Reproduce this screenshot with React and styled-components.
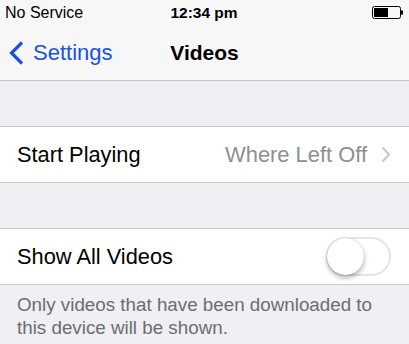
import React, { useState } from "react";
import styled, { createGlobalStyle } from "styled-components";

const GlobalStyle = createGlobalStyle`
  html, body {
    margin: 0;
    padding: 0;
    background: #efeff4;
    font-family: "Liberation Sans", Arial, sans-serif;
  }
`;

const Screen = styled.div`
  width: 409px;
  height: 344px;
  overflow: hidden;
  background: #efeff4;
`;

const Header = styled.header`
  background: #f7f7f8;
  border-bottom: 1px solid #c8c7cc;
`;

const StatusBar = styled.div`
  height: 25px;
  display: grid;
  grid-template-columns: 1fr auto 1fr;
  align-items: center;
  padding: 0 6px 0 5px;
  font-size: 16px;
  color: #000;
`;

const Carrier = styled.span``;

const Clock = styled.span`
  font-weight: bold;
  font-size: 15.5px;
`;

const Battery = styled.div`
  justify-self: end;
  display: flex;
  align-items: center;
`;

const NavBar = styled.div`
  height: 55px;
  display: grid;
  grid-template-columns: 1fr auto 1fr;
  align-items: center;
  padding: 0 8px;
`;

const BackButton = styled.div`
  display: flex;
  align-items: center;
  gap: 9px;
  color: #1a52de;
  font-size: 22px;
`;

const Title = styled.div`
  font-size: 21px;
  font-weight: bold;
  color: #000;
`;

const Spacer = styled.div`
  height: 45px;
`;

const Group = styled.div`
  background: #fff;
  border-top: 1px solid #c8c7cc;
  border-bottom: 1px solid #c8c7cc;
`;

const Row = styled.div`
  height: 55px;
  display: flex;
  align-items: center;
  justify-content: space-between;
  padding: 0 ${(p) => p.$right}px 0 17px;
`;

const Label = styled.span`
  font-size: 21.8px;
  color: #000;
`;

const Detail = styled.span`
  display: flex;
  align-items: center;
  gap: 14px;
  font-size: 21.9px;
  color: #8e8e93;
`;

const Switch = styled.button`
  position: relative;
  width: 65px;
  height: 39px;
  padding: 0;
  border-radius: 20px;
  border: 2px solid #e5e5e5;
  background: #fff;
  cursor: pointer;
`;

const Knob = styled.span`
  position: absolute;
  top: -1px;
  left: ${(p) => (p.$on ? "26px" : "-1px")};
  width: 37px;
  height: 37px;
  border-radius: 50%;
  background: #fff;
  box-shadow: 0 3px 5px rgba(0, 0, 0, 0.3), 0 0 1px rgba(0, 0, 0, 0.25);
`;

const Footer = styled.p`
  margin: 0;
  padding: 8px 17px;
  font-size: 18.8px;
  line-height: 23px;
  color: #6d6d72;
`;

function ChevronLeft() {
  return (
    <svg width="16" height="24" viewBox="0 0 16 24">
      <path d="M14 1.5 L3.5 12 L14 22.5" fill="none" stroke="#1a52de" strokeWidth="3.2" strokeLinecap="butt" strokeLinejoin="miter" />
    </svg>
  );
}

function ChevronRight() {
  return (
    <svg width="10" height="17" viewBox="0 0 10 17">
      <path d="M2 2 L8 8.5 L2 15" fill="none" stroke="#c7c7cc" strokeWidth="2" strokeLinecap="round" strokeLinejoin="round" />
    </svg>
  );
}

function BatteryIcon() {
  return (
    <svg width="31" height="13" viewBox="0 0 31 13">
      <rect x="0.5" y="0.5" width="28" height="12" rx="2" fill="none" stroke="#000" />
      <rect x="2" y="2" width="14" height="9" fill="#000" />
      <rect x="29" y="4.5" width="2" height="4" fill="#000" />
    </svg>
  );
}

export default function App() {
  const [showAll, setShowAll] = useState(false);

  return (
    <Screen>
      <GlobalStyle />
      <Header>
        <StatusBar>
          <Carrier>No Service</Carrier>
          <Clock>12:34 pm</Clock>
          <Battery>
            <BatteryIcon />
          </Battery>
        </StatusBar>
        <NavBar>
          <BackButton>
            <ChevronLeft />
            Settings
          </BackButton>
          <Title>Videos</Title>
          <div />
        </NavBar>
      </Header>
      <Spacer />
      <Group>
        <Row $right={18}>
          <Label>Start Playing</Label>
          <Detail>
            Where Left Off
            <ChevronRight />
          </Detail>
        </Row>
      </Group>
      <Spacer />
      <Group>
        <Row $right={18}>
          <Label>Show All Videos</Label>
          <Switch onClick={() => setShowAll(!showAll)}>
            <Knob $on={showAll} />
          </Switch>
        </Row>
      </Group>
      <Footer>Only videos that have been downloaded to this device will be shown.</Footer>
    </Screen>
  );
}
